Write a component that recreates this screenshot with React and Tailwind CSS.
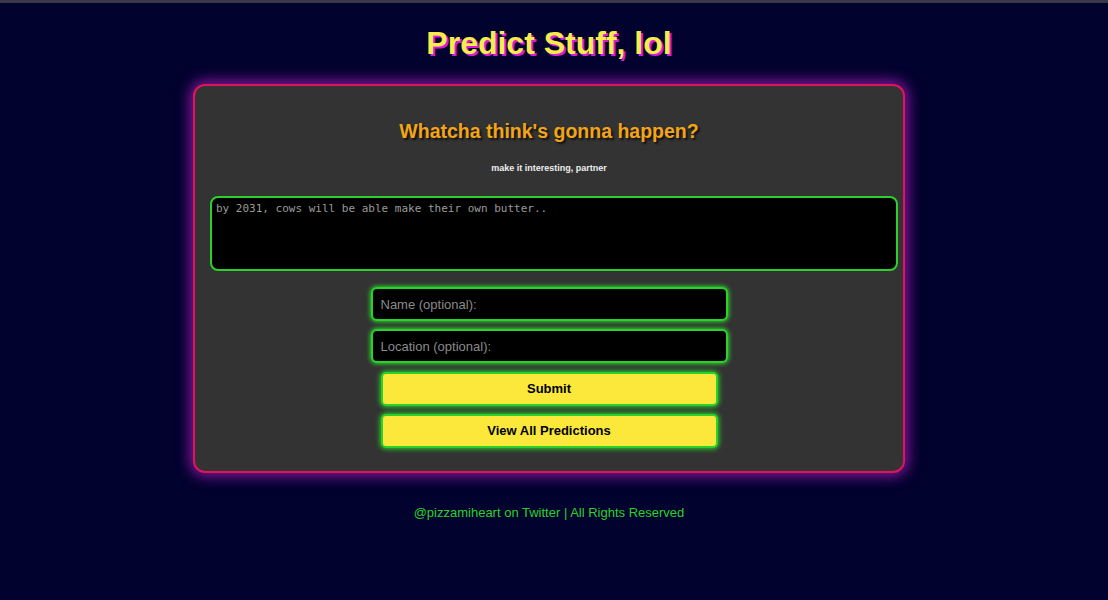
export default function App() {
  const font = { fontFamily: '"Liberation Sans", Arial, sans-serif' };
  return (
    <div
      className="min-h-[600px] bg-[#02022e] border-t-[3px] border-[#3a3848] pr-[10px] flex flex-col items-center font-['Liberation_Sans',Arial,sans-serif]"
    >
      <h1 className="mt-[20px] text-[32px] leading-[40px] font-bold text-[#f9ec4a] [text-shadow:2px_2px_0_#d81bd8]">
        Predict Stuff, lol
      </h1>

      <div className="mt-[21px] w-[712px] rounded-[12px] border-2 border-[#e0145c] bg-[#333333] px-[15px] pt-[32px] pb-[23px] shadow-[0_0_14px_3px_#8a16a0] flex flex-col items-center">
        <h2 className="text-[19.5px] leading-[26px] font-bold text-[#f2a516] [text-shadow:2px_2px_2px_#111]">
          Whatcha think's gonna happen?
        </h2>
        <p className="mt-[19px] text-[9px] leading-[10px] font-bold text-[#eeeeee]">
          make it interesting, partner
        </p>

        <textarea
          placeholder="by 2031, cows will be able make their own butter.."
          className="mt-[23px] self-start w-[688px] h-[75px] resize-none rounded-[8px] border-2 border-[#2ad12a] bg-black px-[4px] py-[3px] text-[11px] leading-[16px] text-[#aaaaaa] placeholder:text-[#9a9a9a] font-['DejaVu_Sans_Mono',monospace] outline-none"
        />

        <input
          placeholder="Name (optional):"
          className="mt-[16px] w-[357px] h-[34px] rounded-[6px] border-2 border-[#2ad12a] bg-black px-[8px] text-[13px] text-[#aaa] placeholder:text-[#8a8a8a] shadow-[0_0_4px_1px_#2ad12a] outline-none"
          style={font}
        />
        <input
          placeholder="Location (optional):"
          className="mt-[8px] w-[357px] h-[34px] rounded-[6px] border-2 border-[#2ad12a] bg-black px-[8px] text-[13px] text-[#aaa] placeholder:text-[#8a8a8a] shadow-[0_0_4px_1px_#2ad12a] outline-none"
          style={font}
        />
        <button className="mt-[9px] w-[337px] h-[34px] rounded-[5px] border-2 border-[#2ad12a] bg-[#fbe83b] text-[13px] font-semibold text-black shadow-[0_0_5px_1px_#2ad12a]">
          Submit
        </button>
        <button className="mt-[8px] w-[337px] h-[34px] rounded-[5px] border-2 border-[#2ad12a] bg-[#fbe83b] text-[13px] font-semibold text-black shadow-[0_0_5px_1px_#2ad12a]">
          View All Predictions
        </button>
      </div>

      <p className="mt-[32px] text-[13px] leading-[16px] text-[#2ad12a]">
        @pizzamiheart on Twitter | All Rights Reserved
      </p>
    </div>
  );
}
